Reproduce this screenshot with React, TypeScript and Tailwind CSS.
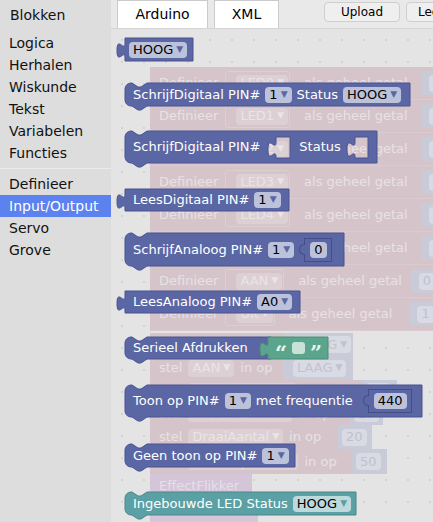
import type { ReactNode } from "react";

type Hole = [number, number, number, number];

// blockly-like outline: statement blocks get a top notch + bottom tab, value blocks a left puzzle tab
function blockPath(w: number, h: number, output?: boolean, holes: Hole[] = []) {
  let d = output
    ? `M0,0 H${w} V${h} H0 V20 c0,-10 -8,8 -8,-7.5 s8,2.5 8,-7.5 Z`
    : `M0,6 A6,6 0 0 1 6,0 H7 l6,4 h3 l6,-4 H${w} V${h} H22 l-6,4 h-3 l-6,-4 H6 A6,6 0 0 1 0,${h - 6} Z`;
  for (const [x1, x2, y1, y2] of holes) {
    d += ` M${x1},${y1} H${x2} V${y2} H${x1} V${y1 + 20} c0,-10 -8,8 -8,-7.5 s8,2.5 8,-7.5 Z`;
  }
  return d;
}

const Block = ({
  className,
  w,
  h,
  fill = "#5b67a5",
  edge = "#4a5390",
  output,
  holes,
  inner = "pl-[8px]",
  children,
}: {
  className: string;
  w: number;
  h: number;
  fill?: string;
  edge?: string;
  output?: boolean;
  holes?: Hole[];
  inner?: string;
  children: ReactNode;
}) => (
  <div className={`absolute ${className}`}>
    <svg className="absolute left-0 top-0 overflow-visible" width={w} height={h}>
      <path d={blockPath(w, h, output, holes)} fill={fill} fillRule="evenodd" stroke={edge} strokeWidth={1} />
    </svg>
    <div className={`relative flex h-full items-center gap-[5px] whitespace-nowrap text-[13px] text-white ${inner}`}>
      {children}
    </div>
  </div>
);

const Dd = ({ label, teal }: { label: string; teal?: boolean }) => (
  <span
    className={`flex h-[16px] items-center gap-[3px] rounded-[4px] px-[4px] text-black ${
      teal ? "bg-[#bdd9db]" : "bg-[#bdc2db]"
    }`}
  >
    {label}
    <span className={`text-[9px] ${teal ? "text-[#5ba0a5]" : "text-[#5b67a5]"}`}>▼</span>
  </span>
);

const NumSlot = ({ value, className }: { value: string; className: string }) => (
  <span className={`relative flex h-[24px] items-center border border-[#434d86] pl-[5px] pr-[4px] ${className}`}>
    <span className="absolute -left-[6px] top-[5px] h-[11px] w-[6px] rounded-l-full border border-r-0 border-[#434d86] bg-[#5b67a5]" />
    <span className="flex h-[16px] items-center rounded-[4px] bg-[#bdc2db] px-[4px] text-black">{value}</span>
  </span>
);

const FadedField = ({ label, className = "" }: { label: string; className?: string }) => (
  <span className={`flex h-[17px] items-center justify-between gap-[3px] rounded-[4px] bg-[#dcd0d4] px-[4px] text-[#ebe4e7] ${className}`}>
    {label}
    <span className="text-[9px]">▼</span>
  </span>
);

const FadedNum = ({ value }: { value: string }) => (
  <span className="flex h-[17px] items-center gap-[3px] rounded-[4px] bg-[#d9dae4] px-[4px] text-[#bfc1cc]">{value}</span>
);

const defs = [
  { name: "LED0", num: "13", pad: "ml-[6px]" },
  { name: "LED1", num: "12", pad: "ml-[6px]" },
  { name: "LED2", num: "11", pad: "ml-[6px]" },
  { name: "LED3", num: "10", pad: "ml-[6px]" },
  { name: "LED4", num: "9", pad: "ml-[6px]" },
  { name: "LED5", num: "8", pad: "ml-[6px]" },
  { name: "AAN", num: "0", pad: "ml-[2px]" },
  { name: "UIt", num: "1", pad: "ml-[10px]" },
];

const stels = [
  { h: "h-[23px]", w: "w-[133px]", field: "AAN", fw: "", val: "HOOG", vw: "w-[70px] pl-[10px]", drop: true },
  { h: "h-[24px]", w: "w-[133px]", field: "AAN", fw: "", val: "LAAG", vw: "w-[70px] pl-[10px]", drop: true },
  { h: "h-[22px]", w: "w-[212px]", field: "Snelheid", fw: "w-[110px]", val: "10", vw: "w-[35px] pl-[4px]", drop: false },
  { h: "h-[23px]", w: "w-[200px]", field: "PinAantal", fw: "w-[104px]", val: "10", vw: "w-[33px] pl-[4px]", drop: false },
  { h: "h-[24px]", w: "w-[188px]", field: "DraaiAantal", fw: "", val: "20", vw: "w-[34px] pl-[4px]", drop: false },
  { h: "h-[25px]", w: "w-[202px]", field: "Wachttijd", fw: "w-[110px]", val: "50", vw: "w-[35px] pl-[4px]", drop: false },
];

const categories = ["Logica", "Herhalen", "Wiskunde", "Tekst", "Variabelen", "Functies"];
const extras = ["Definieer", "Input/Output", "Servo", "Grove"];

export default function App() {
  return (
    <div className="flex h-[522px] w-[433px] overflow-hidden bg-[#e4e4e4] font-['DejaVu_Sans',sans-serif]">
      <aside className="w-[111px] shrink-0 bg-[#dddddd] text-[14px] text-[#111]">
        <div className="flex h-[30px] items-center pl-[10px]">Blokken</div>
        <div className="mt-[2px]">
          {categories.map((c) => (
            <div key={c} className="flex h-[22px] items-center pl-[9px]">
              {c}
            </div>
          ))}
          <div className="my-[4px] h-px bg-[#ebebeb]" />
          {extras.map((c) => (
            <div
              key={c}
              className={`flex h-[22px] items-center pl-[9px] ${c === "Input/Output" ? "bg-[#5b82ee] text-white" : ""}`}
            >
              {c}
            </div>
          ))}
        </div>
      </aside>

      <div className="flex min-w-0 flex-1 flex-col">
        <div className="flex h-[29px] shrink-0 items-start overflow-hidden whitespace-nowrap border-b border-[#d4d4d4] bg-[#e9e9e9] pl-[6px] text-[14px] text-black">
          <div className="flex h-[28px] w-[91px] shrink-0 items-center justify-center border border-b-0 border-[#cbcbcb] bg-white">
            Arduino
          </div>
          <div className="ml-[6px] flex h-[28px] w-[65px] shrink-0 items-center justify-center border border-b-0 border-[#cbcbcb] bg-white">
            XML
          </div>
          <button className="ml-[45px] mt-[2px] flex h-[20px] w-[76px] shrink-0 items-center justify-center rounded-[4px] border border-[#cfcfcf] bg-[#efefef] text-[12px]">
            Upload
          </button>
          <button className="ml-[6px] mt-[2px] flex h-[20px] w-[76px] shrink-0 items-center rounded-[4px] border border-[#cfcfcf] bg-[#efefef] pl-[11px] text-[12px]">
            Leeg
          </button>
        </div>

        <div className="relative flex-1 overflow-hidden bg-[#e4e4e4] bg-[image:radial-gradient(circle,#d3d3d3_1px,transparent_1px)] bg-[length:22px_22px]">
          {/* workspace blocks, dimmed behind the flyout */}
          <div className="absolute left-[39px] top-[38px] w-[420px] text-[13px]">
            {defs.map((d) => (
              <div
                key={d.name}
                className="flex h-[33px] items-center gap-[7px] whitespace-nowrap border-b border-[#d9cbd0] bg-[#d5c5ca] pl-[9px] text-[#e8e1e4]"
              >
                <span>Definieer</span>
                <span className="flex h-[24px] items-center rounded-[3px] border border-[#dbcfd3] pl-[10px] pr-[1px]">
                  <FadedField label={d.name} />
                </span>
                <span className="ml-[7px]">als geheel getal</span>
                <span className={`flex h-[24px] items-center rounded-l-[4px] bg-[#cacbd8] pl-[8px] pr-[6px] ${d.pad}`}>
                  <FadedNum value={d.num} />
                </span>
              </div>
            ))}
          </div>

          <div className="absolute left-[39px] top-[304px] flex flex-col whitespace-nowrap text-[13px]">
            {stels.map((s, i) => (
              <div key={i} className={`flex ${s.h}`}>
                <div className={`flex items-center gap-[6px] bg-[#d5c5ca] pl-[9px] text-[#e8e1e4] ${s.w}`}>
                  <span>stel</span>
                  <FadedField label={s.field} className={s.fw} />
                  <span>in op</span>
                </div>
                <div className={`flex items-center bg-[#cacbd8] ${s.vw}`}>
                  {s.drop ? (
                    <span className="flex h-[17px] items-center gap-[3px] rounded-[4px] bg-[#d9dae4] px-[4px] text-[#c1c3ce]">
                      {s.val}
                      <span className="text-[9px]">▼</span>
                    </span>
                  ) : (
                    <FadedNum value={s.val} />
                  )}
                </div>
              </div>
            ))}
            <div className="flex h-[23px] w-[102px] items-center bg-[#d4c6d8] pl-[9px] text-[#e6dfe8]">EffectFlikker</div>
            <div className="h-[30px] w-[108px] bg-[#d4c6d8]" />
          </div>

          {/* flyout blocks */}
          <Block className="left-[14px] top-[9px] h-[23px] w-[68px]" w={68} h={23} output inner="pl-[4px]">
            <Dd label="HOOG" />
          </Block>

          <Block className="left-[14px] top-[54px] h-[23px] w-[285px]" w={285} h={23}>
            <span>SchrijfDigitaal PIN#</span>
            <Dd label="1" />
            <span>Status</span>
            <Dd label="HOOG" />
          </Block>

          <Block
            className="left-[14px] top-[102px] h-[32px] w-[252px]"
            w={252}
            h={32}
            holes={[
              [151, 165, 6, 27],
              [230, 243, 6, 27],
            ]}
          >
            <span>SchrijfDigitaal PIN#</span>
            <span className="w-[29px]" />
            <span>Status</span>
          </Block>

          <Block className="left-[14px] top-[160px] h-[22px] w-[164px]" w={164} h={22} output>
            <span>LeesDigitaal PIN#</span>
            <Dd label="1" />
          </Block>

          <Block className="left-[14px] top-[204px] h-[33px] w-[219px]" w={219} h={33}>
            <span>SchrijfAnaloog PIN#</span>
            <Dd label="1" />
            <NumSlot value="0" className="ml-[5px]" />
          </Block>

          <Block className="left-[14px] top-[262px] h-[22px] w-[175px]" w={175} h={22} output>
            <span>LeesAnaloog PIN#</span>
            <Dd label="A0" />
          </Block>

          <Block className="left-[14px] top-[308px] h-[22px] w-[146px]" w={146} h={22}>
            <span>Serieel Afdrukken</span>
          </Block>
          <Block
            className="left-[157px] top-[308px] h-[22px] w-[60px]"
            w={60}
            h={22}
            output
            fill="#5ba58c"
            edge="#4b8c76"
            inner="pl-[7px] gap-[5px]"
          >
            <span className="mt-[9px] font-['DejaVu_Serif',serif] text-[21px] font-bold leading-none text-[#e8f4ee]">“</span>
            <span className="h-[12px] w-[13px] rounded-[3px] bg-[#c8e2d7]" />
            <span className="mt-[9px] font-['DejaVu_Serif',serif] text-[21px] font-bold leading-none text-[#e8f4ee]">”</span>
          </Block>

          <Block className="left-[14px] top-[356px] h-[32px] w-[297px]" w={297} h={32}>
            <span>Toon op PIN#</span>
            <Dd label="1" />
            <span>met frequentie</span>
            <NumSlot value="440" className="ml-[10px]" />
          </Block>

          <Block className="left-[14px] top-[415px] h-[23px] w-[170px]" w={170} h={23}>
            <span>Geen toon op PIN#</span>
            <Dd label="1" />
          </Block>

          <Block className="left-[14px] top-[463px] h-[23px] w-[231px]" w={231} h={23} fill="#5ba0a5" edge="#4b878b">
            <span>Ingebouwde LED Status</span>
            <Dd label="HOOG" teal />
          </Block>
        </div>
      </div>
    </div>
  );
}
